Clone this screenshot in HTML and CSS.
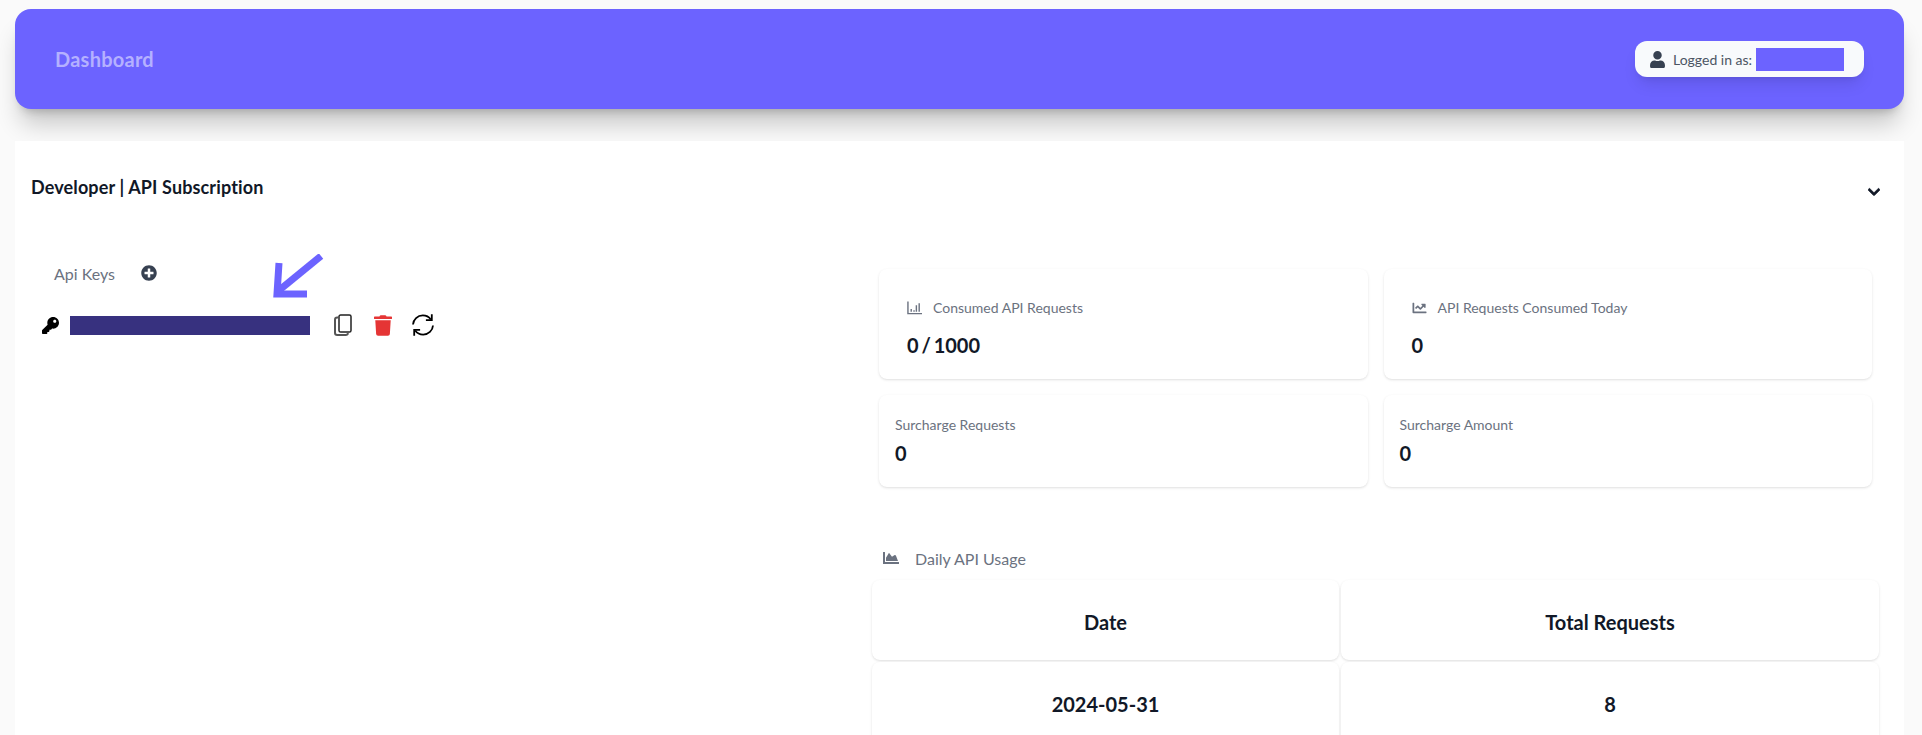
FILE: index.html
```html
<!DOCTYPE html>
<html lang="en">
<head>
	<meta charset="UTF-8">
	<title>Dashboard</title>
	<link rel="stylesheet" href="styles.css">
</head>
<body>
	<header class="top_bar">
		<span class="top_title">Dashboard</span>
		<div class="user_pill">
			<svg class="user_icon" viewBox="0 0 448 512"><path d="M224 256c70.7 0 128-57.3 128-128S294.7 0 224 0 96 57.3 96 128s57.3 128 128 128zm89.6 32h-16.7c-22.2 10.2-46.9 16-72.9 16s-50.6-5.8-72.9-16h-16.7C60.2 288 0 348.2 0 422.4V464c0 26.5 21.5 48 48 48h352c26.5 0 48-21.5 48-48v-41.6c0-74.2-60.2-134.4-134.4-134.4z"/></svg>
			<span class="user_label">Logged in as:</span>
			<span class="user_mask"></span>
		</div>
	</header>

	<section class="panel">
		<div class="panel_head">
			<h2 class="panel_title">Developer | API Subscription</h2>
			<svg class="chevron" viewBox="0 0 448 512"><path d="M207.029 381.476L12.686 187.132c-9.373-9.373-9.373-24.569 0-33.941l22.667-22.667c9.357-9.357 24.522-9.375 33.901-.04L224 284.505l154.745-154.021c9.379-9.335 24.544-9.317 33.901.04l22.667 22.667c9.373 9.373 9.373 24.569 0 33.941L240.971 381.476c-9.373 9.372-24.569 9.372-33.942 0z"/></svg>
		</div>

		<div class="panel_body">
			<div class="keys">
				<div class="keys_head">
					<span class="keys_title">Api Keys</span>
					<svg class="plus_icon" viewBox="0 0 512 512"><path d="M256 8C119 8 8 119 8 256s111 248 248 248 248-111 248-248S393 8 256 8zm144 276c0 6.6-5.4 12-12 12h-92v92c0 6.6-5.4 12-12 12h-56c-6.6 0-12-5.4-12-12v-92h-92c-6.6 0-12-5.4-12-12v-56c0-6.6 5.4-12 12-12h92v-92c0-6.6 5.4-12 12-12h56c6.6 0 12 5.4 12 12v92h92c6.6 0 12 5.4 12 12v56z"/></svg>
				</div>
				<div class="key_row">
					<svg class="key_icon" viewBox="0 0 512 512"><path d="M512 176.001C512 273.203 433.202 352 336 352c-11.22 0-22.19-1.062-32.827-3.069l-24.012 27.014A23.999 23.999 0 0 1 261.223 384H224v40c0 13.255-10.745 24-24 24h-40v40c0 13.255-10.745 24-24 24H24c-13.255 0-24-10.745-24-24v-78.059c0-6.365 2.529-12.47 7.029-16.971l161.802-161.802C163.108 213.814 160 195.271 160 176 160 78.798 238.797.001 335.999 0 433.488-.001 512 78.511 512 176.001zM336 128c0 26.51 21.49 48 48 48s48-21.49 48-48-21.49-48-48-48-48 21.49-48 48z"/></svg>
					<span class="key_mask"></span>
					<svg class="copy_icon" viewBox="0 0 18 22"><path d="M5 2.600c0-.9.7-1.600 1.600-1.600h8.800c.9 0 1.600.7 1.600 1.600v13.800c0 .9-.7 1.600-1.600 1.600H6.600c-.9 0-1.600-.7-1.600-1.600z"/><path class="copy_back" d="M5 3.500H3.200C2 3.500 1 4.500 1 5.700v13.100C1 20 2 21 3.200 21h8.600c1.100 0 2-.8 2.200-1.900"/></svg>
					<svg class="trash_icon" viewBox="0 0 448 512"><path d="M432 32H312l-9.4-18.7A24 24 0 0 0 281.1 0H166.8a23.72 23.72 0 0 0-21.4 13.3L136 32H16A16 16 0 0 0 0 48v32a16 16 0 0 0 16 16h416a16 16 0 0 0 16-16V48a16 16 0 0 0-16-16zM53.2 467a48 48 0 0 0 47.9 45h245.8a48 48 0 0 0 47.9-45L416 128H32z"/></svg>
					<svg class="sync_icon" viewBox="0 0 24 24"><path d="M2 11.500C2.300 6.500 6.600 2.400 11.800 2.400c3.300 0 6.200 1.500 8 4.100"/><path d="M22 12.500c-.3 5-4.600 9.100-9.800 9.100-3.300 0-6.200-1.500-8-4.100"/><path d="M20.800 1.200v5.900h-5.900"/><path d="M3.200 22.800v-5.900h5.900"/></svg>
				</div>
				<svg class="arrow_mark" viewBox="0 0 56 48"><path d="M52 2 8 38"/><path d="M10 9 8 40h30"/></svg>
			</div>

			<div class="usage">
				<div class="stats">
					<div class="stat_card stat_big">
						<div class="stat_label">
							<svg class="stat_icon" viewBox="0 0 16 14"><path class="stat_line" d="M1 0v13h15"/><path class="stat_line" d="M4.500 8v3M7.500 9.500V11M10 4v7M13 2v9"/></svg>
							<span>Consumed API Requests</span>
						</div>
						<div class="stat_value">0 / 1000</div>
					</div>
					<div class="stat_card stat_big">
						<div class="stat_label">
							<svg class="stat_icon" viewBox="0 0 512 512"><path d="M496 384H64V80c0-8.840-7.160-16-16-16H16C7.160 64 0 71.160 0 80v336c0 17.670 14.330 32 32 32h464c8.840 0 16-7.160 16-16v-32c0-8.840-7.160-16-16-16zM464 96H345.940c-21.380 0-32.090 25.850-16.970 40.970l32.400 32.400L288 242.750l-73.370-73.370c-12.500-12.500-32.760-12.500-45.250 0l-68.690 68.690c-6.250 6.250-6.250 16.380 0 22.630l22.620 22.620c6.250 6.250 16.380 6.250 22.630 0L192 237.250l73.370 73.370c12.500 12.500 32.760 12.500 45.250 0l96-96 32.400 32.400c15.120 15.120 40.970 4.410 40.970-16.970V112c0-8.840-7.160-16-16-16z"/></svg>
							<span>API Requests Consumed Today</span>
						</div>
						<div class="stat_value">0</div>
					</div>
					<div class="stat_card">
						<div class="stat_label">Surcharge Requests</div>
						<div class="stat_value">0</div>
					</div>
					<div class="stat_card">
						<div class="stat_label">Surcharge Amount</div>
						<div class="stat_value">0</div>
					</div>
				</div>

				<div class="daily_head">
					<svg class="daily_icon" viewBox="0 0 512 512"><path d="M500 384c6.600 0 12 5.400 12 12v40c0 6.600-5.400 12-12 12H12c-6.600 0-12-5.400-12-12V76c0-6.600 5.400-12 12-12h40c6.600 0 12 5.400 12 12v308h436zM372.700 159.500L288 216l-85.300-113.700c-5.100-6.800-15.500-6.300-19.900 1L96 248v104h384l-67.200-179.200c-3.100-8.200-13-11.200-20.100-6.300z"/></svg>
					<span>Daily API Usage</span>
				</div>

				<table class="daily_table">
					<tr>
						<th>Date</th>
						<th>Total Requests</th>
					</tr>
					<tr>
						<td>2024-05-31</td>
						<td>8</td>
					</tr>
				</table>
			</div>
		</div>
	</section>
</body>
</html>
```

FILE: styles.css
```css
html,body{margin:0;height:735px;overflow:hidden;}
body{padding:9px 18px 0 15px;box-sizing:border-box;background:#fafafa;font-family:Lato,"Noto Sans",sans-serif;color:#111827;}

.top_bar{display:flex;align-items:center;justify-content:space-between;height:100px;padding:0 40px;box-sizing:border-box;background:#6c63ff;border-radius:16px;box-shadow:0 20px 25px -5px rgba(0,0,0,.2),0 8px 10px -6px rgba(0,0,0,.2);}
.top_title{font-size:20px;font-weight:700;letter-spacing:.25px;color:#b5b1ff;}
.user_pill{display:flex;align-items:center;height:36px;padding:0 20px 0 15px;box-sizing:border-box;background:#f8fafc;border-radius:12px;box-shadow:0 10px 15px -3px rgba(0,0,0,.1),0 4px 6px -4px rgba(0,0,0,.1);font-size:14px;color:#4b5563;}
.user_icon{width:15px;height:17px;margin-right:8px;fill:#374151;}
.user_label{width:83px;white-space:nowrap;}
.user_mask{width:88px;height:23px;background:#6c63ff;}

.panel{margin-top:32px;background:#fff;height:620px;}
.panel_head{display:flex;align-items:center;justify-content:space-between;height:94px;padding:0 24px 0 16px;}
.panel_title{margin:0 0 2px;font-size:18px;font-weight:700;letter-spacing:.13px;}
.chevron{width:12px;height:14px;margin-top:8px;fill:#111827;stroke:#111827;stroke-width:30;}

.panel_body{display:flex;padding:0 23px 0 16px;}
.keys{position:relative;width:839px;flex:none;}
.keys_head{display:flex;align-items:center;height:24px;margin-top:26px;padding-left:23px;font-size:16px;color:#6b7280;}
.keys_title{width:87px;}
.plus_icon{width:16px;height:16px;fill:#374151;}
.key_row{display:flex;align-items:center;height:24px;margin-top:28px;padding-left:11px;}
.key_icon{width:17px;height:17px;fill:#000;}
.key_mask{width:240px;height:19px;margin:0 24px 0 11px;background:#37317f;}
.copy_icon{width:18px;height:22px;margin-right:22px;fill:none;stroke:#222;stroke-width:1.5;}
.copy_back{stroke:#555;stroke-width:2;}
.trash_icon{width:18px;height:21px;margin-right:19px;fill:#e53535;}
.sync_icon{width:24px;height:24px;fill:none;stroke:#000;stroke-width:1.8;}
.arrow_mark{position:absolute;top:19px;left:238px;width:56px;height:48px;fill:none;stroke:#6c63ff;stroke-width:7;}

.usage{flex:1;min-width:0;padding-top:34px;}
.stats{display:grid;grid-template-columns:1fr 1fr;gap:16px;margin:0 9px;}
.stat_card{padding:20px 16px;background:#fff;border-radius:8px;box-shadow:0 1px 3px 0 rgba(0,0,0,.1),0 1px 2px -1px rgba(0,0,0,.1);}
.stat_big{padding:29px 28px 20px;}
.stat_label{display:flex;align-items:center;gap:11px;margin-bottom:4px;font-size:14px;line-height:20px;color:#6b7280;}
.stat_big .stat_label{margin-bottom:13px;}
.stat_icon{width:15px;height:14px;fill:#6b7280;}
.stat_line{fill:none;stroke:#6b7280;stroke-width:1.500;}
.stat_value{font-size:20px;font-weight:700;line-height:28px;word-spacing:-2px;}

.daily_head{display:flex;align-items:center;gap:16px;height:24px;margin-top:59px;padding-left:13px;font-size:16px;color:#6b7280;}
.daily_icon{width:16px;height:16px;fill:#6b7280;}
.daily_table{width:100%;margin-top:8px;border-collapse:separate;border-spacing:2px;}
.daily_table th,.daily_table td{height:80px;padding:0;background:#fff;border-radius:8px;box-shadow:0 1px 3px 0 rgba(0,0,0,.1),0 1px 2px -1px rgba(0,0,0,.1);font-size:20px;font-weight:700;text-align:center;}
.daily_table th{padding-top:3px;height:77px;}
.daily_table td{height:84px;}
.daily_table th:first-child,.daily_table td:first-child{width:467px;}
```
